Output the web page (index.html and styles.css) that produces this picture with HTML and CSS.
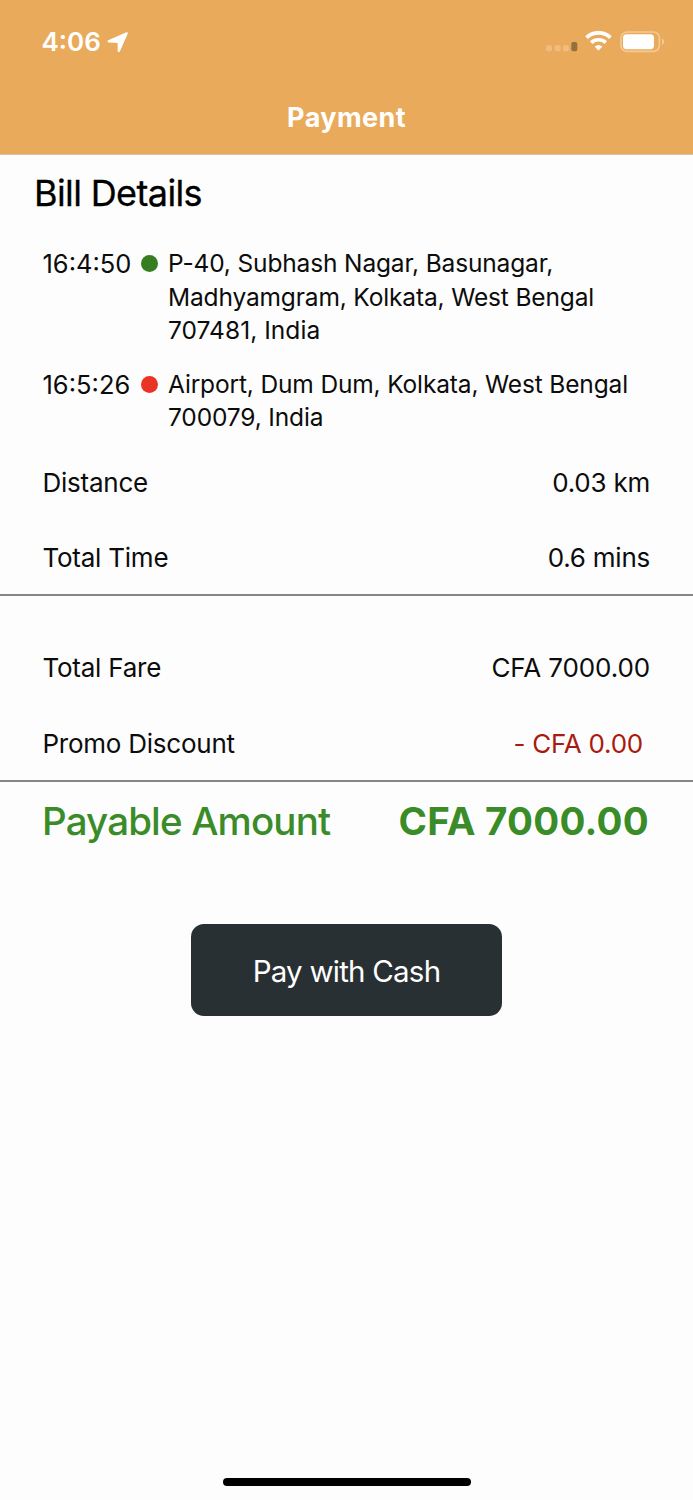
FILE: index.html
```html
<!DOCTYPE html>
<html lang="en">
<head>
<meta charset="utf-8">
<title>Payment</title>
<link rel="stylesheet" href="styles.css">
</head>
<body>
<div class="screen">
  <header class="header">
    <div class="status">
      <div class="status-left">
        <span class="clock">4:06</span>
        <svg class="location" width="22" height="22" viewBox="0 0 22 22"><path d="M1.2 9.2 19.4 1.3Q21.4.8 20.7 2.8L12.8 20.4Q11.4 22 10.7 20.2L10.6 12 1.6 11.6Q-.4 10.5 1.2 9.2Z" fill="#fff"/></svg>
      </div>
      <div class="status-right">
        <svg width="32" height="10" viewBox="0 0 32 10"><g fill="#f0bd80"><rect x="0" y="3.2" width="6" height="6" rx="1.8"/><rect x="8.7" y="3.2" width="6" height="6" rx="1.8"/><rect x="17" y="3.2" width="6" height="6" rx="1.8"/></g><rect x="25.3" y="0" width="6" height="9.3" rx="1.8" fill="#94703f"/></svg>
        <svg class="wifi" width="27" height="20" viewBox="0 0 27 20" fill="none" stroke="#fff"><path d="M1.6 6.6C8.4.3 18.6.3 25.4 6.6" stroke-width="3.9"/><path d="M6.2 11.6C10.4 7.8 16.6 7.8 20.8 11.6" stroke-width="3.7"/><path d="M9.7 15.6Q13.5 12.6 17.3 15.6L14.2 18.9Q13.5 19.6 12.8 18.9Z" fill="#fff" stroke="none"/></svg>
        <svg class="battery" width="45" height="22" viewBox="0 0 45 22"><rect x="1" y="1" width="38.4" height="19.4" rx="6" fill="none" stroke="#f4c997" stroke-width="1.7"/><rect x="3" y="3.2" width="31" height="15" rx="3.6" fill="#fff"/><path d="M42 7.3Q44.2 8.4 44.2 10.7T42 14.1Z" fill="#f4c997"/></svg>
      </div>
    </div>
    <h1 class="title">Payment</h1>
  </header>
  <main>
    <h2 class="bill-title">Bill Details</h2>
    <section class="trip">
      <div class="stop">
        <span class="stop-time">16:4:50</span>
        <span class="dot dot-start"></span>
        <p class="address">P-40, Subhash Nagar, Basunagar,<br>Madhyamgram, Kolkata, West Bengal<br><span class="postcode">707481, India</span></p>
      </div>
      <div class="stop">
        <span class="stop-time">16:5:26</span>
        <span class="dot dot-end"></span>
        <p class="address">Airport, Dum Dum, Kolkata, West Bengal<br>700079, India</p>
      </div>
    </section>
    <section class="rows metrics">
      <div class="row"><span>Distance</span><span>0.03 km</span></div>
      <div class="row"><span>Total Time</span><span>0.6 mins</span></div>
    </section>
    <section class="rows fares">
      <div class="row"><span>Total Fare</span><span class="fare">CFA 7000.00</span></div>
      <div class="row"><span>Promo Discount</span><span class="discount">- CFA 0.00</span></div>
    </section>
    <div class="payable"><span class="payable-label">Payable Amount</span><strong class="payable-value">CFA 7000.00</strong></div>
    <button class="pay" type="button">Pay with Cash</button>
  </main>
  <div class="home-indicator"></div>
</div>
</body>
</html>
```
FILE: styles.css
```css
* { box-sizing: border-box; }
body { margin: 0; font-family: Inter, "Liberation Sans", sans-serif; color: #0c0c0c; background: #fdfdfd; }
h1, h2, p { margin: 0; font-weight: 400; }
.screen { display: flex; flex-direction: column; width: 693px; height: 1500px; overflow: hidden; background: #fdfdfd; white-space: nowrap; }
.header { height: 155px; flex: none; background: #eaaa5b; border-bottom: 1px solid #d9c3aa; }
.status { display: flex; justify-content: space-between; height: 84px; padding: 0 28px 0 41.5px; }
.status-left { display: flex; align-items: center; gap: 6.5px; color: #fff; }
.clock { font-size: 26px; font-weight: 600; padding-bottom: 2px; }
.status-right { display: flex; align-items: flex-start; padding-top: 31px; }
.status-right svg:first-child { margin-top: 11px; }
.wifi { margin-left: 7px; }
.battery { margin-left: 8px; }
.title { text-align: center; color: #fff; font-size: 27px; line-height: 34px; font-weight: 700; letter-spacing: .4px; margin-top: 17px; }
.bill-title { margin: 16px 0 0 34px; font-size: 36px; line-height: 44px; color: #000; letter-spacing: -.62px; -webkit-text-stroke: .3px #000; }
.trip { display: flex; flex-direction: column; gap: 20.4px; padding: 32.4px 42px 0; }
.stop { display: flex; font-size: 24.5px; line-height: 33.4px; }
.stop-time { width: 98.5px; margin-left: .5px; font-size: 25.5px; }
.address { letter-spacing: -.15px; }
.postcode { letter-spacing: .05px; }
.dot { width: 17px; height: 17px; margin: 8px 10px 0 0; border-radius: 50%; }
.dot-start { background: #367d22; }
.dot-end { background: #ea3323; }
.rows { display: flex; flex-direction: column; gap: 35.5px; padding: 0 43px 0 42.5px; font-size: 26px; line-height: 40px; letter-spacing: -.24px; border-bottom: 2px solid #878585; }
.metrics { padding-top: 28px; padding-bottom: 16px; }
.fares { padding-top: 52px; padding-bottom: 16px; }
.row { display: flex; justify-content: space-between; }
.fare { letter-spacing: -.1px; }
.discount { color: #a91b0d; padding-right: 7px; }
.payable { display: flex; justify-content: space-between; padding: 14px 44px 0 42px; font-size: 38.5px; line-height: 50px; color: #3a8c28; }
.payable-label { font-weight: 500; letter-spacing: -.85px; }
.payable-value { font-weight: 700; letter-spacing: .25px; }
.pay { display: block; width: 311px; height: 92px; margin: 78px auto 0; padding: 2px 0 0; border: 0; border-radius: 13px; background: #283033; color: #fff; font: 400 29.5px Inter, sans-serif; letter-spacing: -.77px; }
.home-indicator { width: 248px; height: 8px; margin: auto auto 14px; border-radius: 4px; background: #000; }
```
